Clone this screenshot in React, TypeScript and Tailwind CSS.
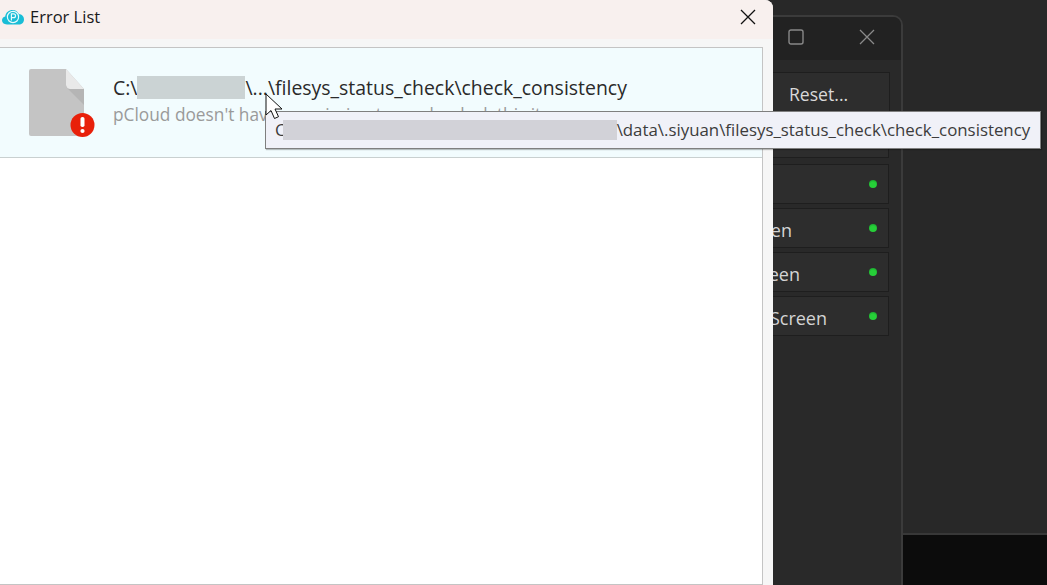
const font = { fontFamily: '"Open Sans", "Noto Sans", sans-serif' };

function Row({ label, labelClass }: { label: string; labelClass: string }) {
  return (
    <div className="relative h-10 w-[158px] border border-[#1e1e1e] bg-[#2d2d2d]">
      {label ? (
        <span className={`absolute top-[9px] text-[18px] leading-6 text-[#d4d4d4] ${labelClass}`}>{label}</span>
      ) : null}
      <span className="absolute right-[11px] top-[15px] size-2 rounded-full bg-[radial-gradient(circle_at_50%_65%,#26cf38_45%,#15902a_100%)]" />
    </div>
  );
}

function PCloudLogo() {
  return (
    <svg width="24" height="16" viewBox="0 0 24 16" className="shrink-0">
      <path d="M6 15.5C2.6 15.5 1 13.4 1 11.3c0-2 1.3-3.5 3.2-3.9C4.8 3.3 8 1 11.5 1c2.9 0 5.3 1.6 6.4 4.1 3 .2 5.1 2.6 5.1 5.3 0 2.9-2.3 5.1-5.2 5.1H6Z" fill="#19bdd6" />
      <circle cx="12" cy="8" r="5.6" fill="none" stroke="#e8fbfd" strokeWidth="1.2" />
      <path d="M10.4 11.4V4.8h2.2a1.9 1.9 0 0 1 0 3.9h-2.2" fill="none" stroke="#e8fbfd" strokeWidth="1.2" />
    </svg>
  );
}

function FileErrorIcon() {
  return (
    <svg width="68" height="70" viewBox="0 0 68 70">
      <path d="M2 0h35l18 20v45a2 2 0 0 1-2 2H2a2 2 0 0 1-2-2V2a2 2 0 0 1 2-2Z" fill="#c4c4c4" />
      <path d="M37 0l18 20H41a4 4 0 0 1-4-4V0Z" fill="#e9e9e9" />
      <path d="M37 16c0 2 2 4 4 4h14v16L37 18v-2Z" fill="#b5b5b5" />
      <circle cx="53.5" cy="56" r="12" fill="#e8200a" />
      <rect x="51.5" y="48" width="4" height="10" rx="1.8" fill="#fff" />
      <circle cx="53.5" cy="62" r="2.1" fill="#fff" />
    </svg>
  );
}

function Cursor() {
  return (
    <svg width="24" height="30" viewBox="0 0 24 30" className="absolute left-[265px] top-[93px]">
      <path d="M1 1v21l5-4.5 3.5 8 4-1.8-3.5-7.7h7L1 1Z" fill="#fff" stroke="#111" strokeWidth="1" strokeLinejoin="miter" />
    </svg>
  );
}

export default function App() {
  return (
    <div className="relative h-[585px] w-[1047px] overflow-hidden bg-[#282828]" style={font}>
      {/* desktop bottom strip */}
      <div className="absolute inset-x-0 bottom-0 h-[52px] border-t-2 border-[#383838] bg-[#0c0c0c]" />

      {/* dark window behind */}
      <div className="absolute left-[600px] top-[15px] flex h-[590px] w-[303px] flex-col overflow-hidden rounded-tr-[10px] border-2 border-[#3b3b3b] bg-[#292929]">
        <div className="flex h-[43px] shrink-0 items-center justify-end bg-[#222222] pb-[4px] pr-[26px]">
          <svg width="16" height="16" viewBox="0 0 16 16" className="mr-[55px] mt-[1px]">
            <rect x="1" y="1" width="14" height="14" rx="2" fill="none" stroke="#888" strokeWidth="1.4" />
          </svg>
          <svg width="16" height="16" viewBox="0 0 16 16" className="mt-[1px]">
            <path d="M1 1l14 14M15 1L1 15" stroke="#8a8a8a" strokeWidth="1.3" fill="none" />
          </svg>
        </div>
        <div className="flex flex-col items-end gap-1 pr-[12px] pt-3">
          <div className="relative -mr-[1px] h-10 w-[159px] border border-[#1e1e1e] bg-[#2d2d2d]">
            <span className="absolute left-[57px] top-[9px] text-[17.6px] leading-6 text-[#d9d9d9]">Reset...</span>
          </div>
          <div className="h-[42px] w-[158px] border border-[#1e1e1e] bg-[#2d2d2d]" />
          <div className="mt-[2px] flex flex-col gap-1">
            <Row label="" labelClass="" />
            <Row label="en" labelClass="right-[96px]" />
            <Row label="een" labelClass="right-[88px]" />
            <Row label="Screen" labelClass="right-[61px]" />
          </div>
        </div>
      </div>

      {/* Error list window */}
      <div className="absolute left-0 top-0 flex h-[585px] w-[773px] flex-col rounded-tr-[8px] bg-[#f6f6f6]">
        <div className="flex h-[39px] shrink-0 items-center justify-between rounded-tr-[8px] bg-[#f8f0ee] pb-[6px] pl-[1px] pr-[17px]">
          <div className="flex items-center gap-[5px]">
            <PCloudLogo />
            <span className="text-[16.5px] leading-6 text-[#1a1a1a]">Error List</span>
          </div>
          <svg width="16" height="16" viewBox="0 0 16 16">
            <path d="M1 1l14 14M15 1L1 15" stroke="#111" strokeWidth="1.3" fill="none" />
          </svg>
        </div>
        <div className="mr-[10px] mt-2 flex-1 border border-l-0 border-[#c4c4c4] bg-white">
          <div className="flex h-[110px] items-center border-b border-[#c9d0d0] bg-[#f2fcfe]">
            <div className="ml-[29px] mt-[3px] w-[84px] shrink-0">
              <FileErrorIcon />
            </div>
            <div className="-mt-[4px] flex min-w-0 flex-col">
              <div className="flex h-[27px] items-center whitespace-nowrap text-[19.45px] leading-[27px] text-[#2a2a2a]">
                <span>C:\</span>
                <span className="h-[23px] w-[108px] bg-[#cbd3d4]" />
                <span>\...\filesys_status_check\check_consistency</span>
              </div>
              <div className="mt-[2px] whitespace-nowrap text-[17.3px] leading-6 text-[#9a9a9a]">pCloud doesn't have permission to read or lock this item.</div>
            </div>
          </div>
        </div>
      </div>

      {/* tooltip */}
      <div className="absolute left-[265px] top-[111px] flex h-[38px] w-[776px] items-center whitespace-nowrap border border-[#7f7f7f] bg-[#f0f1f8] pl-[9px] text-[16.85px] text-[#3c3c3c] shadow-[1px_1px_1px_rgba(0,0,0,0.25)]">
        <span>C</span>
        <span className="-ml-[3px] h-5 w-[334px] shrink-0 bg-[#d2d2d8]" />
        <span>\data\.siyuan\filesys_status_check\check_consistency</span>
      </div>

      <Cursor />
    </div>
  );
}
